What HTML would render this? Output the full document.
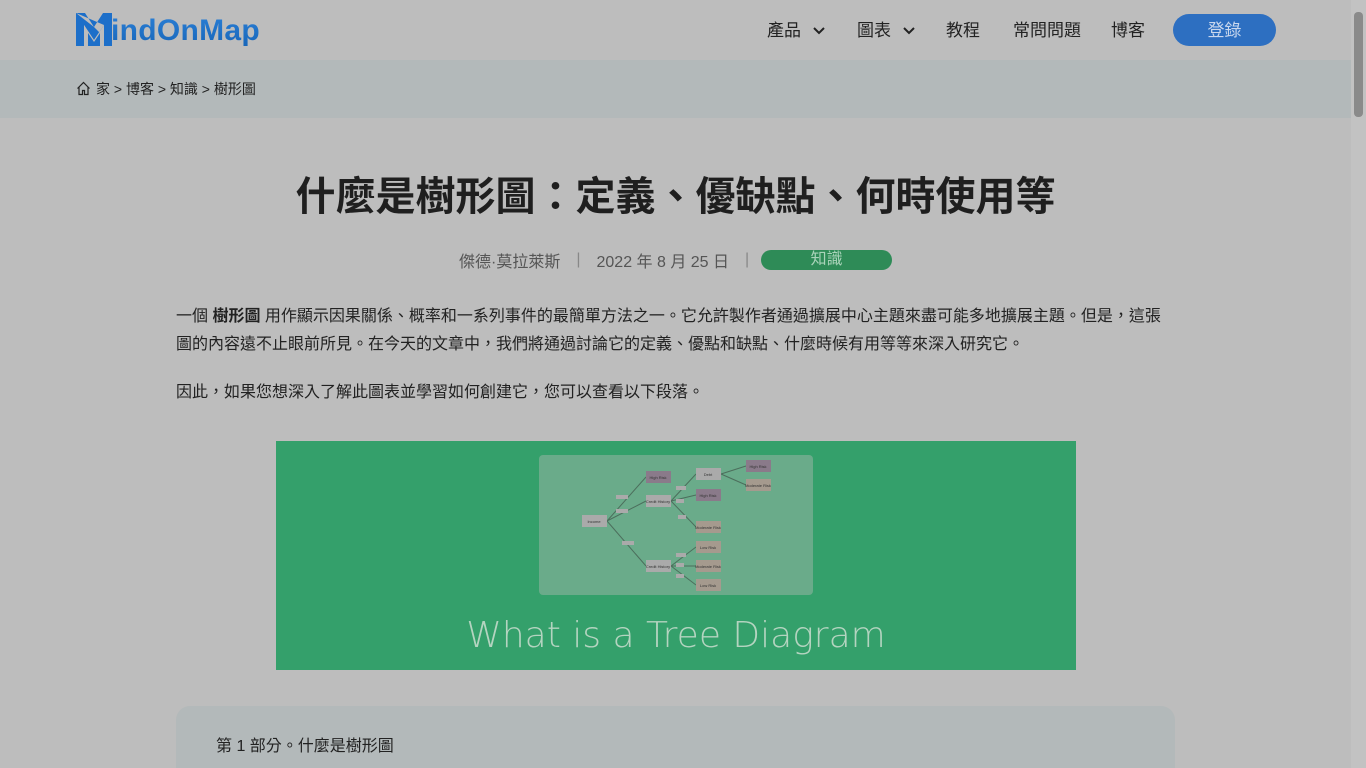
<!DOCTYPE html>
<html><head><meta charset="utf-8"><style>
*{margin:0;padding:0;box-sizing:border-box}
html,body{width:1366px;height:768px;overflow:hidden}
body{background:#bdbdbd;font-family:"Liberation Sans","Noto Sans CJK TC",sans-serif;color:#222;position:relative}
.hdr{height:60px;position:relative}
.logo{position:absolute;left:76px;top:12px;display:flex;align-items:flex-end}
.logo span{font-size:30px;font-weight:bold;background:linear-gradient(#2a7fd6,#1765b8);-webkit-background-clip:text;color:transparent;letter-spacing:0.3px;line-height:34px;margin-left:-1px;position:relative;top:2px}
.nav{position:absolute;top:16px;font-size:17px;color:#222}
.btn{position:absolute;left:1173px;top:14px;width:103px;height:32px;border-radius:16px;background:#2d6fc1;color:#c9d8ee;font-size:17px;text-align:center;line-height:32px;padding-top:1px}
.bc{height:58px;background:#b3b9ba;font-size:14px;color:#222;padding:19px 0 0 96px;position:relative}
h1{position:absolute;top:164px;left:0;width:1351px;text-align:center;font-size:40px;font-weight:bold;color:#1f1f1f}
.meta{position:absolute;top:248px;left:459px;font-size:16px;color:#555;display:flex;align-items:center}
.tag{width:131px;height:20px;border-radius:10px;background:#2e8b57;color:#a9d3b9;text-align:center;line-height:20px;font-size:16px}
p{position:absolute;left:176px;width:1000px;font-size:16px;line-height:28px;color:#222}
.hero{position:absolute;left:276px;top:441px;width:800px;height:229px;background:#34a06b}
.card{position:absolute;left:176px;top:706px;width:999px;height:80px;background:#b3b9ba;border-radius:14px;padding:26px 40px;font-size:16px}
.sb{position:absolute;right:0;top:0;width:15px;height:768px;background:#c2c2c2}
.sb i{position:absolute;left:3px;top:12px;width:9px;height:105px;background:#8a8a8a;border-radius:4px}
</style></head><body>
<div class="hdr">
<div class="logo"><svg width="36" height="33" viewBox="0 0 36 33"><path d="M0 0h9l9 14 9-14h9v33h-8V14l-4 6-6-6zM0 0v33h8V12l10 15 10-15" fill="#1d6fc9"/><path d="M8 12l10 15 10-15v21H8z" fill="#bdbdbd"/><path d="M12 20l6 9 6-9v13H12z" fill="#1d6fc9"/></svg><span>indOnMap</span></div>
<div class="nav" style="left:767px">產品 <svg width="14" height="10" viewBox="0 0 14 10" style="margin-left:6px"><path d="M2 2l5 5 5-5" stroke="#222" stroke-width="2" fill="none"/></svg></div>
<div class="nav" style="left:857px">圖表 <svg width="14" height="10" viewBox="0 0 14 10" style="margin-left:6px"><path d="M2 2l5 5 5-5" stroke="#222" stroke-width="2" fill="none"/></svg></div>
<div class="nav" style="left:946px">教程</div>
<div class="nav" style="left:1013px">常問問題</div>
<div class="nav" style="left:1111px">博客</div>
<div class="btn">登錄</div>
</div>
<div class="bc"><svg style="position:absolute;left:76px;top:21px" width="15" height="15" viewBox="0 0 15 15"><path d="M1.5 7.5L7.5 1.5l6 6M3 6v7.5h3.5V9.5h2v4H12V6" stroke="#222" stroke-width="1.2" fill="none"/></svg>家 &gt; 博客 &gt; 知識 &gt; 樹形圖</div>
<h1>什麼是樹形圖：定義、優缺點、何時使用等</h1>
<div class="meta">傑德·莫拉萊斯<span style="margin:0 16px;color:#888">|</span>2022 年 8 月 25 日<span style="margin:0 12px 0 16px;color:#888">|</span><span class="tag">知識</span></div>
<p style="top:303px">一個 <b>樹形圖</b> 用作顯示因果關係、概率和一系列事件的最簡單方法之一。它允許製作者通過擴展中心主題來盡可能多地擴展主題。但是，這張圖的內容遠不止眼前所見。在今天的文章中，我們將通過討論它的定義、優點和缺點、什麼時候有用等等來深入研究它。</p>
<p style="top:379px">因此，如果您想深入了解此圖表並學習如何創建它，您可以查看以下段落。</p>
<div class="hero">
<svg width="800" height="229" viewBox="0 0 800 229">
<rect x="263" y="14" width="274" height="140" rx="4" fill="#6aab8a"/>
<g stroke="#4c6e5c" stroke-width="1" fill="none">
<path d="M331 80L370 36M331 80L370 60M331 80L370 125M395 60L420 33M395 60L420 54M395 60L420 86M395 125L420 106M395 125L420 125M395 125L420 144M445 33L470 25M445 33L470 44"/>
</g>
<g fill="#aaa"><rect x="340" y="54" width="12" height="4"/><rect x="340" y="68" width="12" height="4"/><rect x="346" y="100" width="12" height="4"/><rect x="400" y="45" width="10" height="4"/><rect x="400" y="58" width="8" height="4"/><rect x="402" y="74" width="8" height="4"/><rect x="400" y="112" width="10" height="4"/><rect x="400" y="122" width="8" height="4"/><rect x="400" y="133" width="8" height="4"/></g>
<g font-size="4" fill="#333" text-anchor="middle" font-family="Liberation Sans">
<rect x="306" y="74" width="25" height="12" fill="#aaa"/><text x="318" y="82">Income</text>
<rect x="370" y="30" width="25" height="12" fill="#8a7a8a"/><text x="382" y="38">High Risk</text>
<rect x="370" y="54" width="25" height="12" fill="#aaa"/><text x="382" y="62">Credit History</text>
<rect x="370" y="119" width="25" height="12" fill="#aaa"/><text x="382" y="127">Credit History</text>
<rect x="420" y="27" width="25" height="12" fill="#aaa"/><text x="432" y="35">Debt</text>
<rect x="420" y="48" width="25" height="12" fill="#8a7a8a"/><text x="432" y="56">High Risk</text>
<rect x="420" y="80" width="25" height="12" fill="#a59a8e"/><text x="432" y="88">Moderate Risk</text>
<rect x="420" y="100" width="25" height="12" fill="#a59a8e"/><text x="432" y="108">Low Risk</text>
<rect x="420" y="119" width="25" height="12" fill="#a59a8e"/><text x="432" y="127">Moderate Risk</text>
<rect x="420" y="138" width="25" height="12" fill="#a59a8e"/><text x="432" y="146">Low Risk</text>
<rect x="470" y="19" width="25" height="12" fill="#8a7a8a"/><text x="482" y="27">High Risk</text>
<rect x="470" y="38" width="25" height="12" fill="#a59a8e"/><text x="482" y="46">Moderate Risk</text>
</g>
<text x="400" y="206" text-anchor="middle" font-size="36" fill="#b4d4c0" font-family="DejaVu Sans" font-weight="200">What is a Tree Diagram</text>
</svg></div>
<div class="card">第 1 部分。什麼是樹形圖</div>
<div class="sb"><i></i></div>
</body></html>
